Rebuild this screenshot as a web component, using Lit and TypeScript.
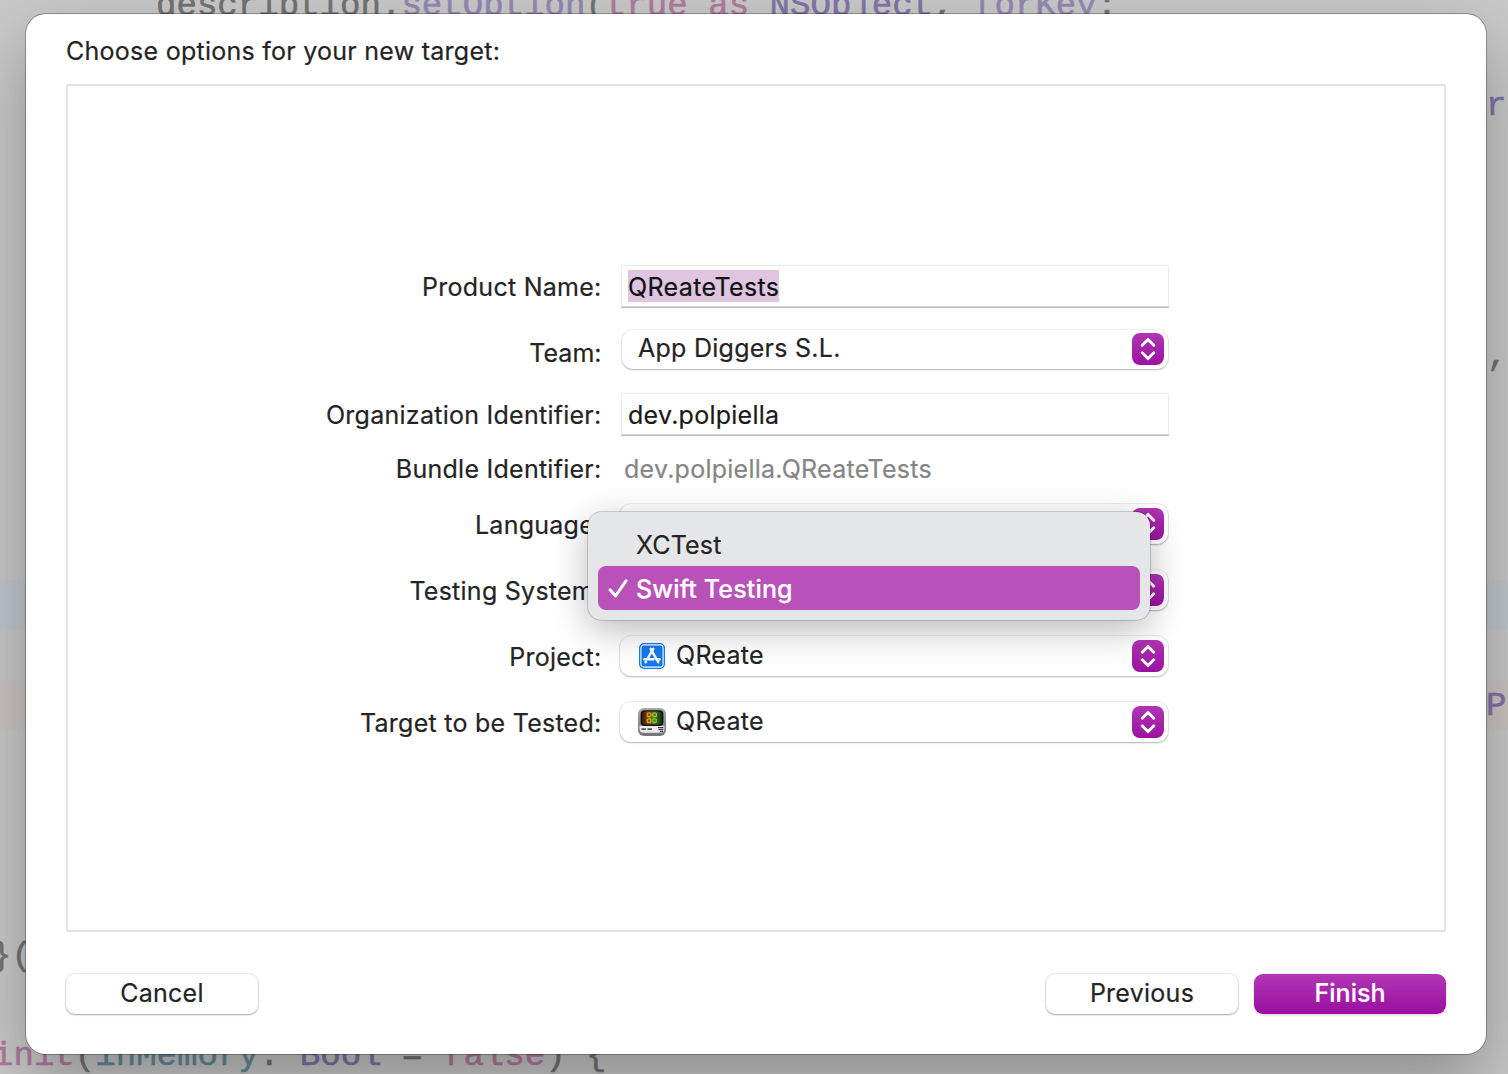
import { LitElement, html, css, svg, nothing } from "lit";
import { customElement, property } from "lit/decorators.js";

type Token = [text: string, kind: string];
interface CodeLine {
  indent: number;
  tokens: Token[];
  band?: string;
}

const CODE: Record<number, CodeLine> = {
  0: {
    indent: 156,
    tokens: [
      ["description.", "plain"],
      ["setOption", "call"],
      ["(", "plain"],
      ["true", "keyword"],
      [" ", "plain"],
      ["as", "keyword"],
      [" ", "plain"],
      ["NSObject", "type"],
      [", ", "plain"],
      ["forKey", "call"],
      [":", "plain"],
    ],
  },
  2: { indent: 1486, tokens: [["r", "type"]] },
  7: { indent: 1487, tokens: [[",", "plain"]] },
  12: { indent: 0, tokens: [], band: "blue" },
  14: { indent: 1486, tokens: [["P", "type"]], band: "red" },
  19: { indent: -9, tokens: [["}(", "plain"]] },
  21: {
    indent: -7,
    tokens: [
      ["init", "keyword"],
      ["(", "plain"],
      ["inMemory", "param"],
      [": ", "plain"],
      ["Bool", "type"],
      [" = ", "plain"],
      ["false", "keyword"],
      [") {", "plain"],
    ],
  },
};

@customElement("code-backdrop")
export class CodeBackdrop extends LitElement {
  static styles = css`
    :host {
      display: block;
      height: 1074px;
      overflow: hidden;
      background: #c9c9c9;
      font: 34.1px/50px "Liberation Mono", monospace;
    }
    .lines {
      margin-top: -20px;
    }
    .line {
      height: 50px;
      -webkit-text-stroke: 0.6px currentColor;
    }
    .text {
      display: inline-block;
      padding-top: 1px;
      white-space: pre;
    }
    .blue { background: #c3c8ce; }
    .red { background: #ccc6c3; }
    .plain { color: #737373; }
    .call { color: #9488b4; }
    .keyword { color: #b27b9f; }
    .type { color: #8075a8; }
    .param { color: #648e9b; }
  `;

  render() {
    return html`<div class="lines">
      ${Array.from({ length: 22 }, (_, i) => {
        const line = CODE[i];
        return html`<div class="line ${line?.band ?? ""}">${
          line?.tokens.length
            ? html`<span class="text" style="margin-left:${line.indent}px">${line.tokens.map(
                ([text, kind]) => html`<span class=${kind}>${text}</span>`
              )}</span>`
            : nothing
        }</div>`;
      })}
    </div>`;
  }
}

const storeIcon = svg`
  <rect x="1" y="1" width="26" height="26" rx="5" fill="#1478ef"/>
  <rect x="2.9" y="2.9" width="22.2" height="22.2" rx="3.2" fill="none" stroke="#fff" stroke-width="1.1"/>
  <g stroke="#fff" stroke-width="2.4" stroke-linecap="round" fill="none">
    <path d="M12.7 6.8 20.2 20.2"/>
    <path d="M15.3 6.8 9.3 17"/>
    <path d="M6.400 17.2H15.5M19.3 17.2H21.600"/>
    <path d="M8 19.6 7.6 20.3"/>
  </g>`;

const appIcon = svg`
  <defs>
    <linearGradient id="shell" x1="0" y1="0" x2="0" y2="1">
      <stop offset="0" stop-color="#a9a9ab"/><stop offset="1" stop-color="#747478"/>
    </linearGradient>
    <linearGradient id="screen" x1="0" y1="0" x2="1" y2="0">
      <stop offset="0" stop-color="#3c1008"/><stop offset=".3" stop-color="#7d5010"/>
      <stop offset=".62" stop-color="#457f1c"/><stop offset="1" stop-color="#06301c"/>
    </linearGradient>
  </defs>
  <rect x="0" y="0" width="28" height="28" rx="6" fill="url(#shell)"/>
  <path d="M1.6 18h24.8v2.800a4 4 0 0 1-4 4H5.600a4 4 0 0 1-4-4z" fill="#e9e9ee"/>
  <rect x="2.600" y="2.200" width="22.800" height="15.800" rx="4" fill="#15120e"/>
  <rect x="4" y="3.500" width="20" height="13" rx="3" fill="url(#screen)"/>
  <g fill="none" stroke-width="1.200">
    <rect x="9.300" y="5" width="3.600" height="3.600" rx="1" stroke="#e0a51c"/>
    <rect x="14.800" y="5" width="3.600" height="3.600" rx="1" stroke="#b6c922"/>
    <rect x="9.300" y="10.800" width="3.600" height="3.600" rx="1" stroke="#dcae1e"/>
    <rect x="14.800" y="10.800" width="3.600" height="3.600" rx="1" stroke="#8fc52c"/>
  </g>
  <path d="M3.500 21.200h4.500M9.500 21.200h4.500" stroke="#55555c" stroke-width="1.700"/>
  <path d="M20 19.700h5.500M20.500 21.500h5M22 23.300h3" stroke="#34343a" stroke-width="1.200"/>`;

@customElement("popup-button")
export class PopupButton extends LitElement {
  @property() label = "";
  @property() icon = "";

  static styles = css`
    :host {
      display: flex;
      align-items: center;
      box-sizing: border-box;
      padding: 0 4px 0 18px;
      border-radius: 11px;
      background: #fff;
      box-shadow: 0 0 0 1px rgba(0, 0, 0, 0.06), 0 1px 2px rgba(0, 0, 0, 0.26);
    }
    .icon {
      width: 28px;
      height: 28px;
      margin-right: 10px;
    }
    .label {
      flex: 1;
      white-space: nowrap;
      margin-top: -2px;
    }
    .cap {
      width: 32px;
      height: 32px;
      border-radius: 8px;
      background: linear-gradient(#b035b4, #9a12a0);
    }
    .cap svg { display: block; }
  `;

  render() {
    const art = this.icon === "store" ? storeIcon : appIcon;
    return html`
      ${this.icon ? html`<svg class="icon" viewBox="0 0 28 28">${art}</svg>` : nothing}
      <span class="label">${this.label}</span>
      <span class="cap">
        <svg width="32" height="32" viewBox="0 0 32 32" fill="none" stroke="#fff"
          stroke-width="2.9" stroke-linecap="round" stroke-linejoin="round">
          <path d="M10.200 12.300 16 6.400l5.800 5.900M10.200 19.700 16 25.600l5.800-5.900"/>
        </svg>
      </span>`;
  }
}

@customElement("app-root")
export class AppRoot extends LitElement {
  static styles = css`
    :host {
      display: block;
      position: relative;
      width: 1508px;
      height: 1074px;
      overflow: hidden;
      font: 25px/32px Inter, sans-serif;
      letter-spacing: 0.26px;
      color: #242424;
    }
    code-backdrop { letter-spacing: 0; }
    .sheet {
      position: absolute;
      inset: 14px 22px 20px 26px;
      display: flex;
      flex-direction: column;
      box-sizing: border-box;
      padding: 21px 40px 40px;
      border-radius: 20px;
      background: #fff;
      box-shadow: 0 0 0 1px rgba(0, 0, 0, 0.28), 0 30px 70px rgba(0, 0, 0, 0.3);
      -webkit-text-stroke: 0.2px currentColor;
    }
    .title {
      margin: 0 0 17px;
      font: inherit;
      white-space: nowrap;
    }
    .panel {
      box-sizing: border-box;
      height: 848px;
      border: 2px solid #e3e3e3;
      padding: 180px 276px 0 0;
    }
    .row {
      display: flex;
      gap: 19.5px;
      height: 42px;
      margin-top: 24px;
    }
    .row.name { margin-top: 0; }
    .row.org { margin-top: 20px; }
    .row.bundle { margin-top: 12px; }
    .row.lang { margin-top: 14px; }
    .label {
      width: 533.5px;
      text-align: right;
      line-height: 42px;
      white-space: nowrap;
    }
    .control {
      position: relative;
      flex: 1;
    }
    .field {
      box-sizing: border-box;
      height: 42px;
      margin: -1px -1px 0 0;
      padding: 5px 6px;
      border: 1px solid #ebebeb;
      border-bottom-color: #d6d6d6;
      box-shadow: 0 1px 0 #b9b9b9;
      color: #1a1a1a;
    }
    .selected {
      display: block;
      width: fit-content;
      margin-top: -1px;
      padding-top: 2px;
      line-height: 30px;
      background: #dfc5e0;
      color: #111;
      letter-spacing: 0.36px;
    }
    .value {
      padding-left: 3px;
      line-height: 42px;
      color: #858585;
    }
    popup-button {
      height: 40px;
      margin-left: -1px;
    }
    .team .label { letter-spacing: 0; }
    .team popup-button {
      height: 39px;
      margin: -2px 0 0 1px;
      padding: 0 4px 1px 16px;
    }
    .menu {
      position: absolute;
      z-index: 2;
      left: -33px;
      top: -58px;
      width: 562px;
      height: 108px;
      box-sizing: border-box;
      padding: 10px;
      border-radius: 14px;
      background: #e5e6e7;
      box-shadow: 0 0 0 1px rgba(0, 0, 0, 0.17), 0 10px 36px rgba(0, 0, 0, 0.28);
    }
    .option {
      display: flex;
      align-items: center;
      box-sizing: border-box;
      height: 44px;
      padding: 2px 0 0 10px;
      border-radius: 8px;
      white-space: nowrap;
      letter-spacing: 0.15px;
    }
    .option svg, .option .blank {
      width: 22px;
      height: 22px;
      margin: -2px 6px 0 0;
    }
    .active {
      background: #b852b9;
      color: #fff;
      font-weight: 500;
    }
    .actions {
      display: flex;
      gap: 16px;
      margin-top: 42px;
    }
    .button {
      width: 192px;
      height: 40px;
      padding: 0 0 2px;
      border: 0;
      border-radius: 9px;
      background: #fff;
      color: inherit;
      font: inherit;
      letter-spacing: inherit;
      line-height: 38px;
      box-shadow: 0 0 0 1px rgba(0, 0, 0, 0.07), 0 1px 2px rgba(0, 0, 0, 0.3);
    }
    .cancel { margin-right: auto; }
    .primary {
      background: linear-gradient(#b037b4, #9b0ea1);
      color: #fff;
      font-weight: 500;
      letter-spacing: 0;
      box-shadow: 0 1px 3px rgba(155, 14, 161, 0.25);
    }
  `;

  private row(kind: string, label: string, control: unknown) {
    return html`<div class="row ${kind}">
      <span class="label">${label}</span>
      <div class="control">${control}</div>
    </div>`;
  }

  private menu() {
    return html`<div class="menu" role="listbox">
      <div class="option"><span class="blank"></span>XCTest</div>
      <div class="option active">
        <svg viewBox="0 0 22 22" fill="none" stroke="#fff" stroke-width="3"
          stroke-linecap="round" stroke-linejoin="round"><path d="M2 12.800 7.500 19 18 3.800"/></svg>
        Swift Testing
      </div>
    </div>`;
  }

  render() {
    return html`
      <code-backdrop></code-backdrop>
      <div class="sheet" role="dialog">
        <h1 class="title">Choose options for your new target:</h1>
        <div class="panel">
          ${this.row("name", "Product Name:", html`<div class="field"><span class="selected">QReateTests</span></div>`)}
          ${this.row("team", "Team:", html`<popup-button label="App Diggers S.L."></popup-button>`)}
          ${this.row("org", "Organization Identifier:", html`<div class="field">dev.polpiella</div>`)}
          ${this.row("bundle", "Bundle Identifier:", html`<div class="value">dev.polpiella.QReateTests</div>`)}
          ${this.row("lang", "Language:", html`<popup-button></popup-button>`)}
          ${this.row("system", "Testing System:", html`<popup-button></popup-button>${this.menu()}`)}
          ${this.row("project", "Project:", html`<popup-button icon="store" label="QReate"></popup-button>`)}
          ${this.row("target", "Target to be Tested:", html`<popup-button icon="app" label="QReate"></popup-button>`)}
        </div>
        <div class="actions">
          <button class="button cancel">Cancel</button>
          <button class="button">Previous</button>
          <button class="button primary">Finish</button>
        </div>
      </div>`;
  }
}
